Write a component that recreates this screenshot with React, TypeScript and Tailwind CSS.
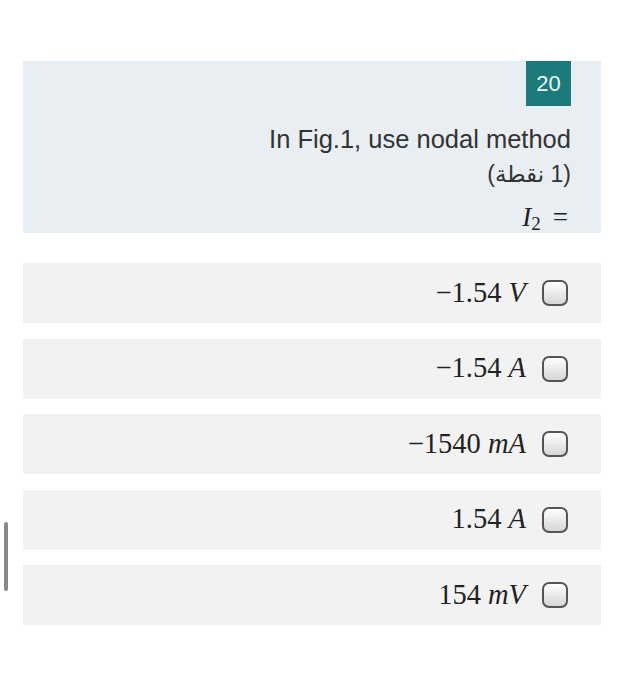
const options = [
  { num: "−1.54", unit: "V" },
  { num: "−1.54", unit: "A" },
  { num: "−1540", unit: "mA" },
  { num: "1.54", unit: "A" },
  { num: "154", unit: "mV" },
];

function Checkbox() {
  return (
    <span className="w-[26px] h-[26px] shrink-0 rounded-[7px] border-2 border-[#555] bg-gradient-to-b from-white to-[#d6d6d6]" />
  );
}

export default function App() {
  return (
    <div className="relative w-[624px] h-[700px] bg-white font-['Liberation_Sans',sans-serif]">
      {/* scroll indicator */}
      <div className="absolute left-[4px] top-[522px] w-[4px] h-[69px] rounded-full bg-[#8a8a8a]" />

      <div className="px-[23px] pt-[61px]">
        <div className="bg-[#e8eef2] h-[172px] flex flex-col items-end pr-[30px]">
          <div className="shrink-0 w-[45px] h-[45px] bg-[#1c7a7b] text-[#e8f6f6] text-[22px] flex items-center justify-center">
            20
          </div>
          <div className="shrink-0 mt-[19px] h-[28px] text-[25.5px] leading-[28px] text-[#333]">
            In Fig.1, use nodal method
          </div>
          <div
            dir="rtl"
            className="shrink-0 mt-[7px] h-[28px] text-[23px] leading-[28px] text-[#333] font-['Liberation_Sans','DejaVu_Sans',sans-serif]"
          >
            (1 نقطة)
          </div>
          <div className="shrink-0 mt-[14px] mr-[3px] text-[27px] leading-[30px] text-[#222] font-['Liberation_Serif',serif]">
            <span className="italic">I</span>
            <span className="text-[19px] leading-none align-[-4px]">2</span>
            <span className="ml-[12px]">=</span>
          </div>
        </div>

        <div className="mt-[30px] flex flex-col gap-[15.5px]">
          {options.map((o, i) => (
            <div
              key={i}
              className="h-[60px] bg-[#f2f2f2] flex items-center justify-end pr-[33px] gap-[16px]"
            >
              <span className="text-[28.5px] text-[#222] font-['Liberation_Serif',serif]">
                {o.num} <span className="italic">{o.unit}</span>
              </span>
              <Checkbox />
            </div>
          ))}
        </div>
      </div>
    </div>
  );
}
